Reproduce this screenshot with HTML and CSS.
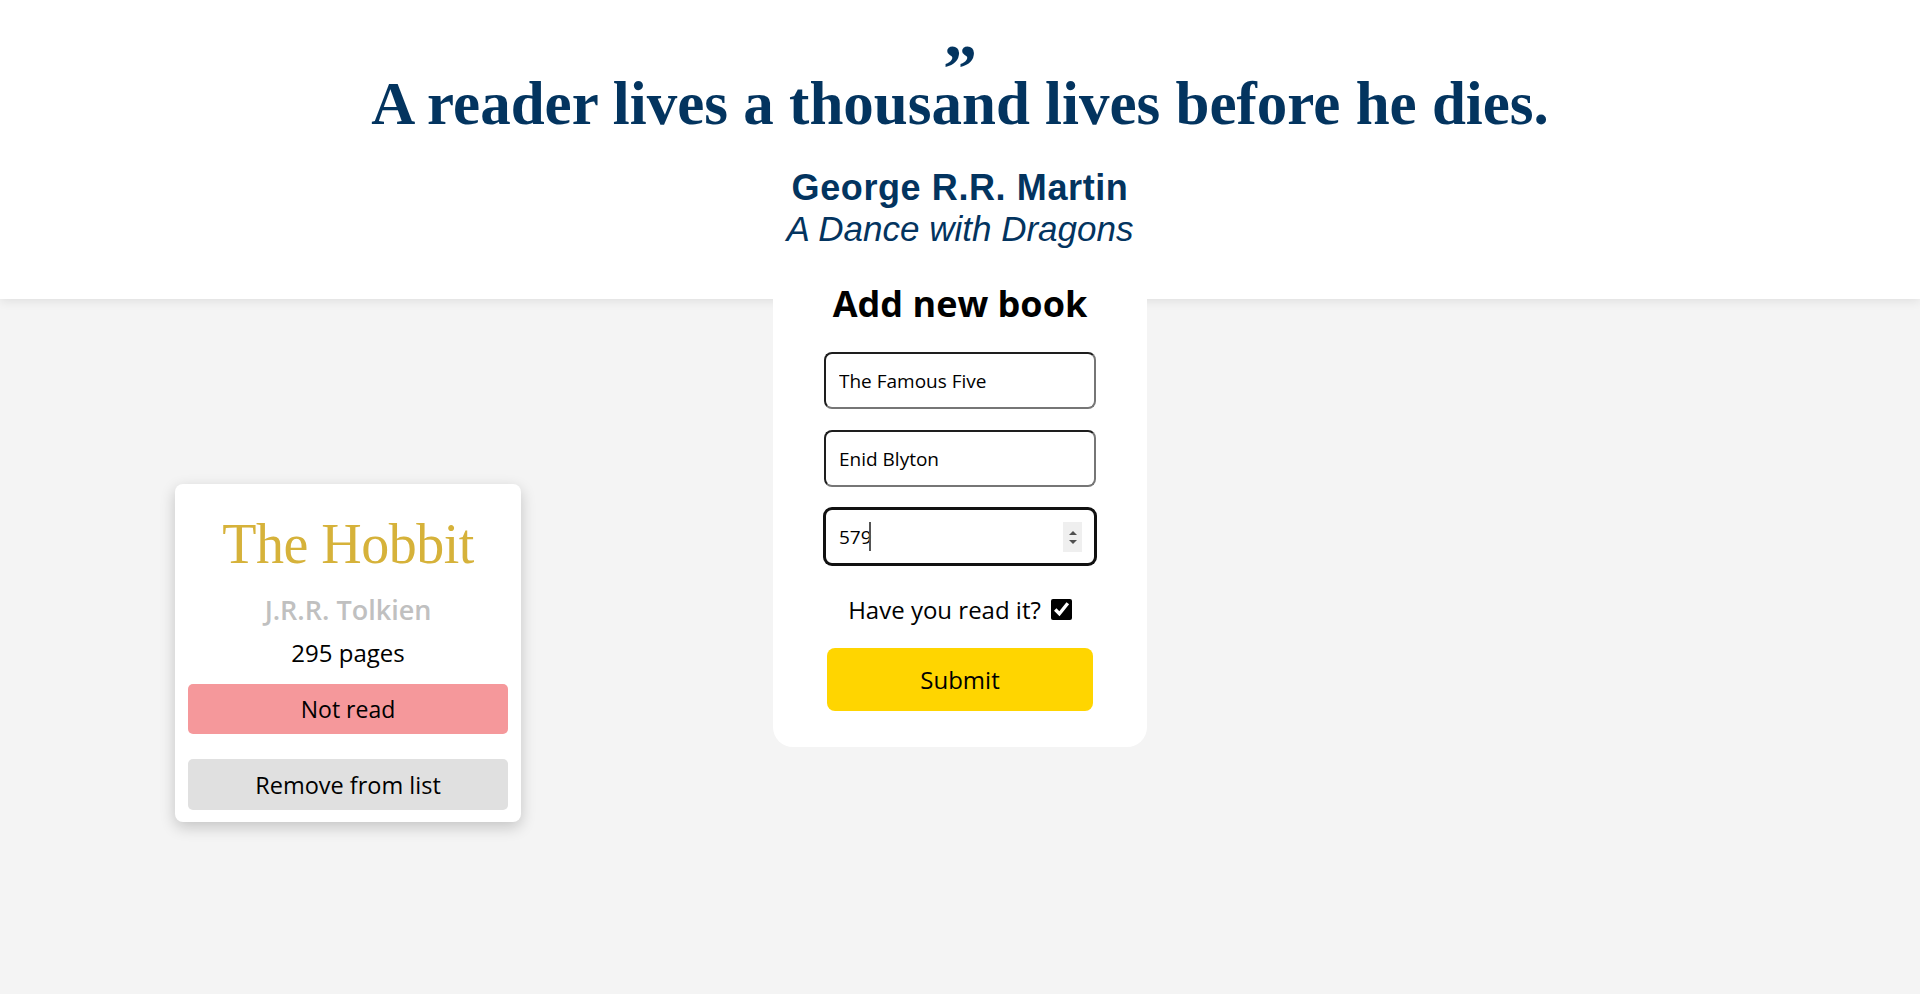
FILE: index.html
```html
<!DOCTYPE html>
<html lang="en">
<head>
<meta charset="utf-8">
<title>Library</title>
<link rel="stylesheet" href="styles.css">
</head>
<body>
<header class="hero">
  <div class="hero__mark">&rdquo;</div>
  <h1 class="hero__quote">A reader lives a thousand lives before he dies.</h1>
  <p class="hero__author">George R.R. Martin</p>
  <p class="hero__source">A Dance with Dragons</p>
</header>
<main class="main">
  <section class="books">
    <article class="book">
      <h2 class="book__title">The Hobbit</h2>
      <p class="book__author">J.R.R. Tolkien</p>
      <p class="book__pages">295 pages</p>
      <button class="book__btn book__btn--unread" type="button">Not read</button>
      <button class="book__btn book__btn--remove" type="button">Remove from list</button>
    </article>
  </section>
  <form class="add-form">
    <h2 class="add-form__title">Add new book</h2>
    <input class="add-form__input" type="text" value="The Famous Five">
    <input class="add-form__input" type="text" value="Enid Blyton">
    <div class="add-form__field">
      <input class="add-form__input add-form__input--focused" type="number" value="579">
      <span class="add-form__caret"></span>
      <span class="add-form__spin"><span class="add-form__spin-up"></span><span class="add-form__spin-down"></span></span>
    </div>
    <label class="add-form__check">Have you read it? <input class="add-form__checkbox" type="checkbox" checked></label>
    <button class="add-form__submit" type="button">Submit</button>
  </form>
  <div class="spacer"></div>
</main>
</body>
</html>
```
FILE: styles.css
```css
* { box-sizing: border-box; }

html, body { margin: 0; padding: 0; }

body {
  background: #f4f4f4;
  font-family: "Open Sans", "Noto Sans", sans-serif;
  color: #000;
  height: 994px;
  display: flex;
  flex-direction: column;
  overflow: hidden;
}

.hero {
  position: relative;
  z-index: 1;
  background: #fff;
  box-shadow: 0 2px 10px rgba(0, 0, 0, 0.09);
  padding: 60px 0 50px;
  text-align: center;
  color: #03345f;
}

.hero__mark {
  font-family: "Liberation Serif", serif;
  font-weight: 700;
  font-size: 68px;
  line-height: 16px;
  height: 16px;
}

.hero__quote {
  margin: 0;
  padding-top: 1px;
  font-family: "Liberation Serif", serif;
  font-weight: 700;
  font-size: 61px;
  line-height: 54px;
  letter-spacing: 0;
}

.hero__author {
  margin: 36px 0 0;
  font-family: "Liberation Sans", Arial, sans-serif;
  font-weight: 700;
  font-size: 36px;
  line-height: 41px;
  letter-spacing: 0.6px;
}

.hero__source {
  margin: 0;
  font-family: "Liberation Sans", Arial, sans-serif;
  font-style: italic;
  font-size: 35px;
  line-height: 41px;
}

.main {
  flex: 1;
  display: grid;
  grid-template-columns: 1fr 374px 1fr;
  align-items: start;
}

.books {
  padding: 185px 0 0 175px;
}

.book {
  width: 346px;
  background: #fff;
  border-radius: 8px;
  box-shadow: 0 5px 15px rgba(0, 0, 0, 0.2);
  padding: 27px 13px 12px;
  display: flex;
  flex-direction: column;
  align-items: stretch;
  text-align: center;
}

.book__title {
  margin: 0;
  font-family: "Liberation Serif", serif;
  font-weight: 400;
  font-size: 56px;
  line-height: 66px;
  letter-spacing: -0.5px;
  color: #d6b23a;
}

.book__author {
  margin: 14px 0 0;
  font-size: 27px;
  line-height: 38px;
  font-weight: 600;
  color: #c0c0c0;
}

.book__pages {
  margin: 8px 0 0;
  font-size: 24px;
  line-height: 31px;
}

.book__btn {
  border: none;
  border-radius: 5px;
  font-family: inherit;
  font-size: 23px;
  color: #000;
  cursor: pointer;
}

.book__btn--unread {
  margin-top: 16px;
  height: 50px;
  background: #f5989b;
}

.book__btn--remove {
  margin-top: 25px;
  height: 51px;
  background: #e0e0e0;
  font-size: 23.5px;
}

.add-form {
  position: relative;
  z-index: 2;
  margin-top: -29px;
  background: #fff;
  border-radius: 20px;
  padding: 11px 0 36px;
  display: flex;
  flex-direction: column;
  align-items: center;
}

.add-form__title {
  margin: 0;
  font-size: 36px;
  line-height: 46px;
  font-weight: 700;
}

.add-form__input {
  width: 272px;
  height: 57px;
  margin-top: 21px;
  padding: 0 12px 0 13px;
  border: 2px solid;
  border-color: #1e1e1e #767676 #767676 #1e1e1e;
  border-radius: 8px;
  font-family: inherit;
  font-size: 19px;
  color: #000;
  background: #fff;
}

.add-form__title + .add-form__input { margin-top: 25px; }

.add-form__field {
  position: relative;
  margin-top: 21px;
}

.add-form__field .add-form__input { margin-top: 0; }

.add-form__input--focused {
  border-color: #111;
  box-shadow: 0 0 0 1px #111;
  outline: none;
}

.add-form__input::-webkit-inner-spin-button,
.add-form__input::-webkit-outer-spin-button {
  -webkit-appearance: none;
  margin: 0;
}

.add-form__caret {
  position: absolute;
  left: 45px;
  top: 14px;
  width: 2px;
  height: 29px;
  background: #555;
}

.add-form__spin {
  position: absolute;
  right: 14px;
  top: 14px;
  width: 19px;
  height: 30px;
  background: #efefef;
  display: flex;
  flex-direction: column;
  align-items: center;
  justify-content: center;
  gap: 5px;
}

.add-form__spin-up {
  width: 0;
  height: 0;
  border-left: 4px solid transparent;
  border-right: 4px solid transparent;
  border-bottom: 4px solid #505050;
}

.add-form__spin-down {
  width: 0;
  height: 0;
  border-left: 4px solid transparent;
  border-right: 4px solid transparent;
  border-top: 4px solid #505050;
}

.add-form__check {
  margin-top: 28px;
  display: flex;
  align-items: center;
  gap: 10px;
  font-size: 24px;
  line-height: 33px;
}

.add-form__checkbox {
  margin: 0;
  width: 21px;
  height: 21px;
  accent-color: #000;
}

.add-form__submit {
  margin-top: 22px;
  width: 266px;
  height: 63px;
  border: none;
  border-radius: 8px;
  background: #ffd500;
  font-family: inherit;
  font-size: 24px;
  color: #000;
  cursor: pointer;
}
```
